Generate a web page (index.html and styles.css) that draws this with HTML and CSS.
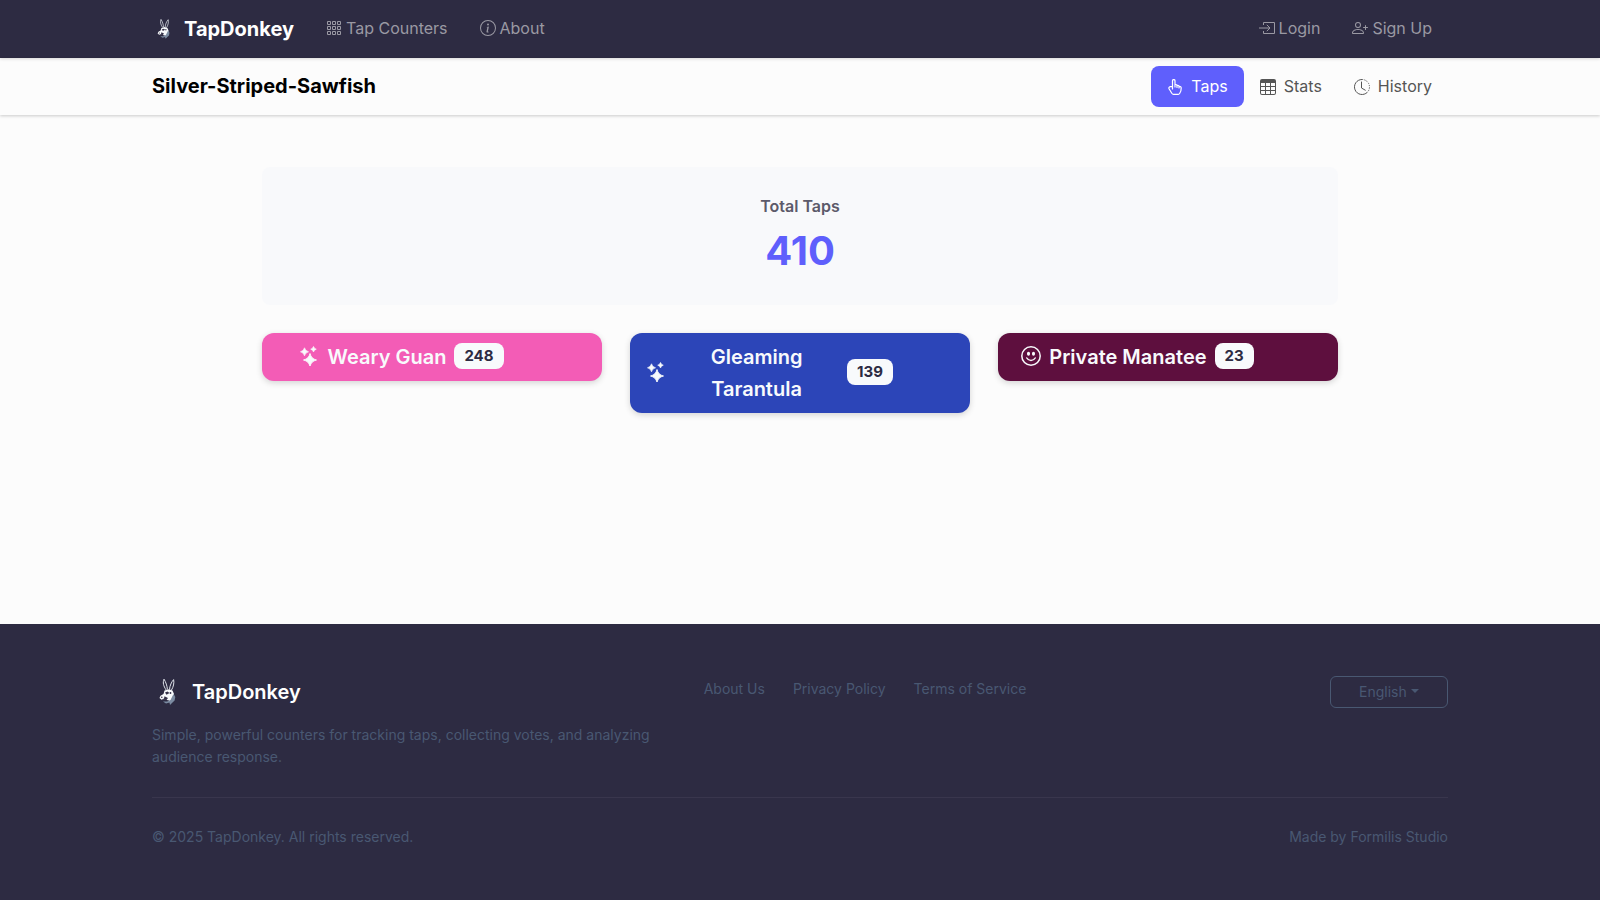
FILE: index.html
```html
<!DOCTYPE html>
<html lang="en">
<head>
    <meta charset="UTF-8">
    <meta name="viewport" content="width=device-width, initial-scale=1.0">
    <title>Silver-Striped-Sawfish - TapDonkey</title>
    <link rel="stylesheet" href="styles.css">
</head>
<body>
    <svg class="sprite" aria-hidden="true">
        <symbol id="donkey" viewBox="0 0 32 32">
            <path d="M14.200 14C11.400 10 10.600 6.500 12 3.200C13.800 6 15.200 10 15.400 13.500" fill="none" stroke="#dfe3ea" stroke-width="1"/>
            <path d="M17.500 13.500C17.800 9.500 19.500 6 21.600 3.600C22.400 7 21.400 11 19.300 14.300" fill="none" stroke="#dfe3ea" stroke-width="1"/>
            <path d="M12.500 14.500L17 13.200L20.500 14.500L22 18L22.200 22L20.500 25L18.500 27.500L17 24.500L13 23.500L9.500 23.800L7.500 22L8.500 19.800L11.500 18Z" fill="#f8fafc"/>
            <path d="M21.500 18L23.300 21L22.600 24.500L20 27L18 29L17.500 26.500L14 27.500L11 25.500L15 25.500L18.500 24Z" fill="#7b8ba1"/>
            <path d="M13 16.500L15.500 15.500L17.500 17L14.500 18.800ZM12.500 20.300L16 22L14.500 24L9.500 23.800L12 22.600Z" fill="#343148"/>
            <circle cx="9.800" cy="21.300" r=".8" fill="#343148"/>
            <circle cx="18.500" cy="17" r=".9" fill="#343148"/>
        </symbol>
        <symbol id="stars" viewBox="0 0 20 20">
            <path d="M11 7.500Q12.200 12.800 17.500 14Q12.200 15.200 11 20.300Q9.800 15.200 4.500 14Q9.800 12.800 11 7.500Z" fill="currentColor" stroke="currentColor" stroke-width=".9" stroke-linejoin="round"/>
            <path d="M5.500 1.800Q6.200 5 9.500 5.800Q6.200 6.600 5.500 9.800Q4.800 6.600 1.500 5.800Q4.800 5 5.500 1.800Z" fill="currentColor" stroke="currentColor" stroke-width=".7" stroke-linejoin="round"/>
            <path d="M14.500 .4Q15.100 2.600 17.300 3.200Q15.100 3.800 14.500 6Q13.900 3.800 11.700 3.200Q13.900 2.600 14.500 .4Z" fill="currentColor" stroke="currentColor" stroke-width=".6" stroke-linejoin="round"/>
        </symbol>
    </svg>

    <header class="navbar">
        <div class="container bar">
            <a href="#" class="brand">
                <svg class="logo"><use href="#donkey"/></svg>
                TapDonkey
            </a>
            <nav class="nav">
                <a href="#" class="nav-link">
                    <svg class="icon" viewBox="0 0 16 16" fill="none" stroke="currentColor"><path d="M1.500 1.500h3v3h-3zM6.500 1.500h3v3h-3zM11.500 1.500h3v3h-3zM1.500 6.500h3v3h-3zM6.500 6.500h3v3h-3zM11.500 6.500h3v3h-3zM1.500 11.500h3v3h-3zM6.500 11.500h3v3h-3zM11.500 11.500h3v3h-3z"/></svg>
                    Tap Counters
                </a>
                <a href="#" class="nav-link">
                    <svg class="icon" viewBox="0 0 16 16" fill="currentColor"><path d="M8 15A7 7 0 1 1 8 1a7 7 0 0 1 0 14m0 1A8 8 0 1 0 8 0a8 8 0 0 0 0 16"/><path d="m8.930 6.588-2.290.287-.082.380.450.083c.294.070.352.176.288.469l-.738 3.468c-.194.897.105 1.319.808 1.319.545 0 1.178-.252 1.465-.598l.088-.416c-.200.176-.492.246-.686.246-.275 0-.375-.193-.304-.533zM9 4.500a1 1 0 1 1-2 0 1 1 0 0 1 2 0"/></svg>
                    About
                </a>
            </nav>
            <nav class="nav nav-end">
                <a href="#" class="nav-link">
                    <svg class="icon" viewBox="0 0 16 16" fill="none" stroke="currentColor"><path d="M4.500 5V2.500h11v11h-11V11M0 8h11M7.800 4.800L11 8l-3.200 3.200" stroke-linejoin="round"/></svg>
                    Login
                </a>
                <a href="#" class="nav-link">
                    <svg class="icon" viewBox="0 0 16 16" fill="currentColor"><path d="M6 8a3 3 0 1 0 0-6 3 3 0 0 0 0 6m2-3a2 2 0 1 1-4 0 2 2 0 0 1 4 0m4 8c0 1-1 1-1 1H1s-1 0-1-1 1-4 6-4 6 3 6 4m-1-.004c-.001-.246-.154-.986-.832-1.664C9.516 10.680 8.289 10 6 10s-3.516.680-4.168 1.332c-.678.678-.830 1.418-.832 1.664z"/><path d="M13.500 5a.5.5 0 0 1 .5.5V7h1.500a.5.5 0 0 1 0 1H14v1.500a.5.5 0 0 1-1 0V8h-1.500a.5.5 0 0 1 0-1H13V5.500a.5.5 0 0 1 .5-.5"/></svg>
                    Sign Up
                </a>
            </nav>
        </div>
    </header>

    <div class="subnav">
        <div class="container bar">
            <h1 class="title">Silver-Striped-Sawfish</h1>
            <nav class="tabs">
                <a href="#" class="tab active">
                    <svg class="icon" viewBox="0 0 16 16" fill="none" stroke="currentColor" stroke-width="1.200" stroke-linejoin="round" stroke-linecap="round"><path d="M5.500 10V1.800a1.250 1.250 0 0 1 2.500 0V7M8 8V5.600c1.200-.3 2 .1 2 1.100V8.500M10 6.500c1.200-.3 2 .1 2 1.200V9M12 7.500c1.500-.2 2.200.4 2.200 1.500 0 2.500-.1 3.700-1.400 5.200-.5.800-.8 1.200-1.500 1.200H6.500c-.8 0-1.200-.4-1.700-1.200L2.200 10c-.7-1.200-.2-2.200 1.100-2.400L5.500 7.500"/></svg>
                    Taps
                </a>
                <a href="#" class="tab">
                    <svg class="icon" viewBox="0 0 16 16" fill="currentColor"><path d="M0 2a2 2 0 0 1 2-2h12a2 2 0 0 1 2 2v12a2 2 0 0 1-2 2H2a2 2 0 0 1-2-2zm15 2h-4v3h4zm0 4h-4v3h4zm0 4h-4v3h3a1 1 0 0 0 1-1zm-5 3v-3H6v3zm-5 0v-3H1v2a1 1 0 0 0 1 1zm-4-4h4V8H1zm0-4h4V4H1zm5-3v3h4V4zm4 4H6v3h4z"/></svg>
                    Stats
                </a>
                <a href="#" class="tab">
                    <svg class="icon" viewBox="0 0 16 16" fill="none" stroke="currentColor"><path d="M8 .5a7.500 7.500 0 1 0 5.300 12.800"/><path d="M8 .5a7.500 7.500 0 0 1 5.300 12.800" stroke-dasharray="1.200 1.200"/><path d="M7.500 3v6l3.800 2.200" stroke-linecap="round" stroke-linejoin="round"/></svg>
                    History
                </a>
            </nav>
        </div>
    </div>

    <main class="content">
        <section class="total">
            <h2 class="total-label">Total Taps</h2>
            <p class="total-value">410</p>
        </section>
        <section class="counters">
            <button type="button" class="counter pink">
                <svg class="counter-icon"><use href="#stars"/></svg>
                <span class="counter-name">Weary Guan</span>
                <span class="badge">248</span>
            </button>
            <button type="button" class="counter blue">
                <svg class="counter-icon"><use href="#stars"/></svg>
                <span class="counter-name">Gleaming Tarantula</span>
                <span class="badge">139</span>
            </button>
            <button type="button" class="counter maroon">
                <svg class="counter-icon" viewBox="0 0 20 20" fill="none" stroke="currentColor" stroke-width="1.500"><circle cx="10" cy="10" r="9.200"/><path d="M5.800 12c1.800 3.200 6.600 3.200 8.400 0" stroke-linecap="round"/><ellipse cx="7.500" cy="7.800" rx=".8" ry="1.200" fill="currentColor"/><ellipse cx="12.500" cy="7.800" rx=".8" ry="1.200" fill="currentColor"/></svg>
                <span class="counter-name">Private Manatee</span>
                <span class="badge">23</span>
            </button>
        </section>
    </main>

    <footer class="footer">
        <div class="container">
            <div class="footer-top">
                <div class="footer-about">
                    <a href="#" class="brand footer-brand">
                        <svg class="logo"><use href="#donkey"/></svg>
                        TapDonkey
                    </a>
                    <p>Simple, powerful counters for tracking taps, collecting votes, and analyzing audience response.</p>
                </div>
                <nav class="footer-links">
                    <a href="#">About Us</a>
                    <a href="#">Privacy Policy</a>
                    <a href="#">Terms of Service</a>
                </nav>
                <label class="language">
                    <select aria-label="Language">
                        <option>English</option>
                    </select>
                    <span class="caret"></span>
                </label>
            </div>
            <div class="footer-bottom">
                <p>&copy; 2025 TapDonkey. All rights reserved.</p>
                <p>Made by <a href="#">Formilis Studio</a></p>
            </div>
        </div>
    </footer>
</body>
</html>
```
FILE: styles.css
```css
* {
    margin: 0;
    padding: 0;
    box-sizing: border-box;
}

body {
    display: flex;
    flex-direction: column;
    min-height: 100vh;
    font-family: Inter, "Liberation Sans", sans-serif;
    font-size: 16px;
    line-height: 26px;
    color: #000;
    background-color: #fcfcfc;
}

a {
    color: inherit;
    text-decoration: none;
}

.sprite {
    display: none;
}

.container {
    width: 100%;
    max-width: 1320px;
    margin: 0 auto;
    padding: 0 12px;
}

.bar {
    display: flex;
    align-items: center;
}

.icon {
    width: 16px;
    height: 16px;
    flex-shrink: 0;
}

/* Top navigation */
.navbar {
    padding: 8px 0;
    background-color: #2d2b42;
    box-shadow: 0 1px 3px rgba(0, 0, 0, 0.15);
}

.brand {
    display: flex;
    align-items: center;
    gap: 8px;
    margin-right: 16px;
    font-size: 20px;
    font-weight: 700;
    color: #fff;
}

.logo {
    width: 24px;
    height: 24px;
}

.nav {
    display: flex;
}

.nav-end {
    margin-left: auto;
}

.nav-link {
    display: flex;
    align-items: center;
    gap: 4px;
    padding: 8px 16px 10px;
    line-height: 24px;
    color: #9a99a3;
}

/* Counter set bar */
.subnav {
    padding: 8px 0;
    line-height: 25px;
    box-shadow: 0 1px 3px rgba(0, 0, 0, 0.2);
}

.title {
    font-size: 20px;
    font-weight: 700;
}

.tabs {
    display: flex;
    margin-left: auto;
}

.tab {
    display: flex;
    align-items: center;
    gap: 8px;
    padding: 8px 16px;
    border-radius: 8px;
    color: #555;
}

.tab.active {
    background-color: #5f5ffc;
    color: #fff;
}

/* Counters */
.content {
    flex: 1;
    width: 100%;
    max-width: 1100px;
    margin: 0 auto;
    padding: 52px 12px;
}

.total {
    margin-bottom: 28px;
    padding: 26px 24px 30px;
    border-radius: 8px;
    background-color: #f8f9fb;
    text-align: center;
}

.total-label {
    margin-bottom: 8px;
    font-size: 16px;
    font-weight: 600;
    color: #5c5a6a;
}

.total-value {
    font-size: 40px;
    line-height: 48px;
    font-weight: 700;
    color: #5f5ffc;
}

.counters {
    display: grid;
    grid-template-columns: repeat(3, 1fr);
    gap: 28px;
    align-items: start;
}

.counter {
    display: flex;
    align-items: center;
    justify-content: center;
    gap: 8px;
    padding: 8px 77px 8px 16px;
    border: none;
    border-radius: 12px;
    font-family: inherit;
    font-size: 20px;
    line-height: 32px;
    font-weight: 600;
    color: #f8fafc;
    box-shadow: 0 2px 6px rgba(0, 0, 0, 0.16);
    cursor: pointer;
}

.pink {
    background-color: #f35cb6;
}

.blue {
    background-color: #2c45b8;
}

.maroon {
    background-color: #5e0f3e;
}

.counter-icon {
    width: 20px;
    height: 20px;
    margin-bottom: 2px;
    flex-shrink: 0;
}

.badge {
    margin-bottom: 2px;
    padding: 0 10px;
    border-radius: 8px;
    background-color: #f8fafc;
    color: #2d2b42;
    font-size: 15px;
    line-height: 26px;
    font-weight: 700;
}

/* Footer */
.footer {
    padding: 52px 0;
    background-color: #2d2b42;
    color: #495872;
    font-size: 14px;
    line-height: 22px;
}

.footer-top {
    display: grid;
    grid-template-columns: repeat(12, 1fr);
    column-gap: 28px;
    align-items: start;
    padding-bottom: 29px;
    border-bottom: 1px solid #39364d;
}

.footer-about {
    grid-column: span 5;
}

.footer-brand {
    margin-bottom: 16px;
    font-weight: 600;
}

.footer-brand .logo {
    width: 32px;
    height: 32px;
}

.footer-links {
    grid-column: span 4;
    display: flex;
    gap: 28px;
    padding-top: 2px;
}

.language {
    grid-column: span 3;
    display: flex;
    align-items: center;
    justify-self: end;
    gap: 4px;
    padding: 4px 28px;
    border: 1px solid #495872;
    border-radius: 6px;
}

.language select {
    appearance: none;
    border: none;
    background: none;
    color: inherit;
    font-family: inherit;
    font-size: 14px;
    line-height: 22px;
    cursor: pointer;
}

.caret {
    margin-bottom: 2px;
    border-top: 4px solid;
    border-left: 4px solid transparent;
    border-right: 4px solid transparent;
}

.footer-bottom {
    display: flex;
    justify-content: space-between;
    padding-top: 28px;
}
```
